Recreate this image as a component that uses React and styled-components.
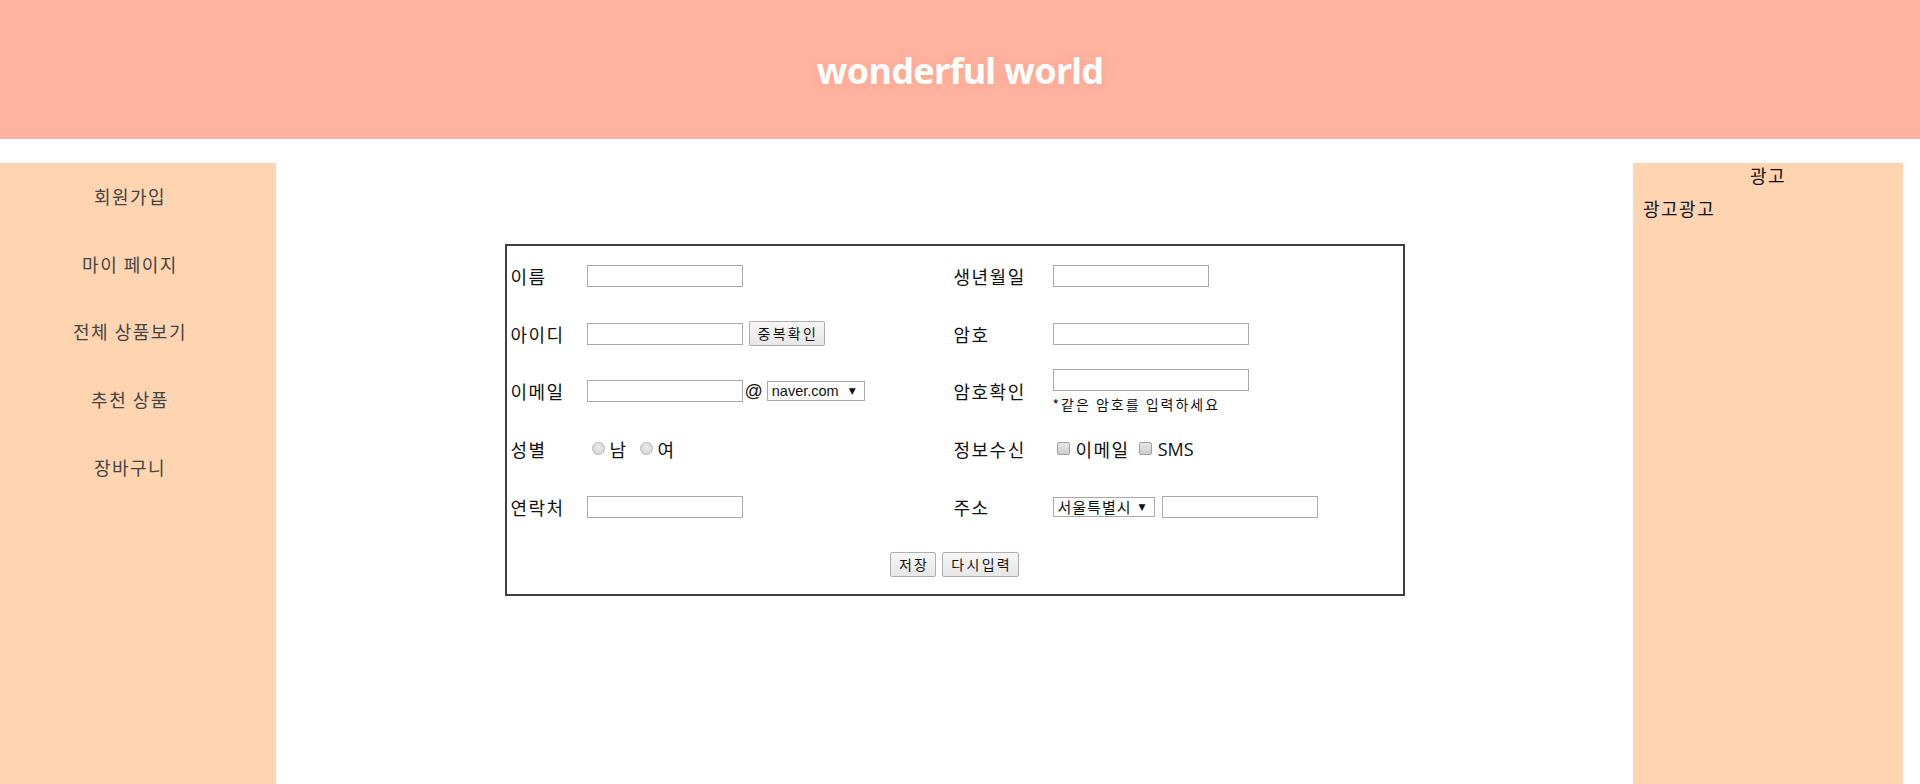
import React from "react";
import styled, { createGlobalStyle } from "styled-components";

const GlobalStyle = createGlobalStyle`
  html, body {
    margin: 0;
    padding: 0;
    background: #fff;
    overflow: hidden;
  }
  body {
    font-family: "Noto Sans CJK KR", "Noto Sans", sans-serif;
    color: #111;
  }
`;

const Header = styled.header`
  height: 139px;
  background-color: #ffb2a0;
  display: flex;
  align-items: center;
  justify-content: center;
`;

const Title = styled.h1`
  margin: 0;
  padding-top: 2px;
  font-family: "Noto Sans", sans-serif;
  font-size: 36px;
  font-weight: 700;
  letter-spacing: -0.7px;
  color: #fff;
  text-shadow: 0 0 10px rgba(255, 150, 110, 0.45);
`;

const Main = styled.div`
  width: 1903px;
  margin-top: 24px;
  height: calc(100vh - 163px);
  display: flex;
`;

const Nav = styled.nav`
  width: 276px;
  flex-shrink: 0;
  background-color: #fed4b1;
`;

const NavList = styled.ul`
  list-style: none;
  margin: 0;
  padding: 0 16px 0 0;
`;

const NavItem = styled.li`
  height: 67.7px;
  line-height: 67.7px;
  text-align: center;
  font-size: 18px;
  letter-spacing: 1.5px;
  color: #444;
`;

const Center = styled.section`
  flex: 1;
`;

const FormBox = styled.form`
  box-sizing: border-box;
  width: 900px;
  margin: 81px auto 0;
  border: 2px solid #404040;
  padding: 1px 4px 1px;
  display: grid;
  grid-template-columns: 76px 367px 99px 1fr;
  grid-auto-rows: 57.7px;
  align-items: center;
`;

const Label = styled.div`
  font-size: 18px;
  letter-spacing: 1.5px;
  color: #111;
`;

const Field = styled.div`
  display: flex;
  align-items: center;
`;

const Stack = styled.div`
  display: flex;
  flex-direction: column;
  gap: 4px;
`;

const TextInput = styled.input`
  box-sizing: border-box;
  width: ${(p) => p.$w || 156}px;
  height: 22px;
  margin: 0;
  border: 1px solid #a9a9a9;
  padding: 0 3px;
  font-size: 14px;
  outline: none;
`;

const Button = styled.button`
  box-sizing: border-box;
  height: 25px;
  margin: 0 0 0 ${(p) => p.$ml || 0}px;
  padding: 0 6px 0 8px;
  border: 1px solid #adadad;
  border-radius: 2px;
  background: linear-gradient(#f6f6f6, #e6e6e6);
  font-family: "Noto Sans CJK KR", sans-serif;
  font-size: 14px;
  letter-spacing: 2.3px;
  color: #111;
  line-height: 23px;
`;

const At = styled.span`
  font-size: 18px;
  margin: 0 4px 0 2px;
  font-family: "Liberation Sans", sans-serif;
`;

const SelectWrap = styled.span`
  position: relative;
  display: inline-flex;
  margin-right: ${(p) => p.$mr || 0}px;
`;

const Select = styled.select`
  appearance: none;
  box-sizing: border-box;
  width: ${(p) => p.$w}px;
  height: 20px;
  margin: 0;
  padding: 0 0 0 4px;
  border: 1px solid #a9a9a9;
  background: #fff;
  font-family: ${(p) => (p.$latin ? '"Liberation Sans"' : '"Noto Sans CJK KR"')}, sans-serif;
  font-size: ${(p) => (p.$latin ? 14.5 : 15)}px;
  letter-spacing: ${(p) => (p.$latin ? 0 : 1)}px;
  color: #111;
  line-height: 18px;
`;

const Arrow = styled.span`
  position: absolute;
  right: 9px;
  top: 50%;
  transform: translateY(-50%);
  font-family: "DejaVu Sans", sans-serif;
  font-size: 9px;
  color: #111;
  pointer-events: none;
`;

const Radio = styled.input.attrs({ type: "radio" })`
  appearance: none;
  box-sizing: border-box;
  width: 13px;
  height: 13px;
  margin: 0 5px 0 ${(p) => p.$ml || 0}px;
  border: 1px solid #b5b5b5;
  border-radius: 50%;
  background: radial-gradient(circle at 50% 40%, #ececec, #cfcfcf);
`;

const Check = styled.input.attrs({ type: "checkbox" })`
  appearance: none;
  box-sizing: border-box;
  width: 13px;
  height: 13px;
  margin: 0 6px 0 ${(p) => p.$ml || 0}px;
  border: 1px solid #a0a0a0;
  border-radius: 2px;
  background: linear-gradient(#e8e8e8, #cdcdcd);
`;

const OptionText = styled.span`
  font-size: 18px;
  letter-spacing: ${(p) => (p.$latin ? 0 : 1.5)}px;
  color: #111;
  font-family: ${(p) => (p.$latin ? '"Open Sans"' : '"Noto Sans CJK KR"')}, sans-serif;
`;

const Hint = styled.div`
  font-size: 14px;
  letter-spacing: 2px;
  line-height: 18px;
  color: #111;
`;

const ButtonRow = styled.div`
  grid-column: 1 / -1;
  display: flex;
  justify-content: center;
  gap: 6px;
`;

const Aside = styled.aside`
  width: 270px;
  flex-shrink: 0;
  background-color: #fed4b1;
  font-size: 18px;
  letter-spacing: 1.5px;
  color: #111;
`;

const AdTitle = styled.div`
  text-align: center;
  line-height: 25px;
`;

const AdText = styled.div`
  margin-top: 7px;
  padding-left: 10px;
  line-height: 26px;
`;

const menu = ["회원가입", "마이 페이지", "전체 상품보기", "추천 상품", "장바구니"];

export default function App() {
  return (
    <>
      <GlobalStyle />
      <Header>
        <Title>wonderful world</Title>
      </Header>
      <Main>
        <Nav>
          <NavList>
            {menu.map((m) => (
              <NavItem key={m}>{m}</NavItem>
            ))}
          </NavList>
        </Nav>
        <Center>
          <FormBox onSubmit={(e) => e.preventDefault()}>
            <Label>이름</Label>
            <Field>
              <TextInput />
            </Field>
            <Label>생년월일</Label>
            <Field>
              <TextInput />
            </Field>

            <Label>아이디</Label>
            <Field>
              <TextInput />
              <Button type="button" $ml={6}>중복확인</Button>
            </Field>
            <Label>암호</Label>
            <Field>
              <TextInput type="password" $w={196} />
            </Field>

            <Label>이메일</Label>
            <Field>
              <TextInput />
              <At>@</At>
              <SelectWrap>
                <Select $w={98} $latin defaultValue="naver.com">
                  <option>naver.com</option>
                  <option>daum.net</option>
                  <option>gmail.com</option>
                </Select>
                <Arrow>▼</Arrow>
              </SelectWrap>
            </Field>
            <Label>암호확인</Label>
            <Stack>
              <TextInput type="password" $w={196} />
              <Hint>*같은 암호를 입력하세요</Hint>
            </Stack>

            <Label>성별</Label>
            <Field>
              <Radio name="gender" $ml={5} />
              <OptionText>남</OptionText>
              <Radio name="gender" $ml={12} />
              <OptionText>여</OptionText>
            </Field>
            <Label>정보수신</Label>
            <Field>
              <Check $ml={4} />
              <OptionText>이메일</OptionText>
              <Check $ml={9} />
              <OptionText $latin>SMS</OptionText>
            </Field>

            <Label>연락처</Label>
            <Field>
              <TextInput />
            </Field>
            <Label>주소</Label>
            <Field>
              <SelectWrap $mr={7}>
                <Select $w={102} defaultValue="서울특별시">
                  <option>서울특별시</option>
                  <option>경기도</option>
                  <option>부산광역시</option>
                </Select>
                <Arrow>▼</Arrow>
              </SelectWrap>
              <TextInput />
            </Field>

            <ButtonRow>
              <Button type="submit">저장</Button>
              <Button type="reset">다시입력</Button>
            </ButtonRow>
          </FormBox>
        </Center>
        <Aside>
          <AdTitle>광고</AdTitle>
          <AdText>광고광고</AdText>
        </Aside>
      </Main>
    </>
  );
}
